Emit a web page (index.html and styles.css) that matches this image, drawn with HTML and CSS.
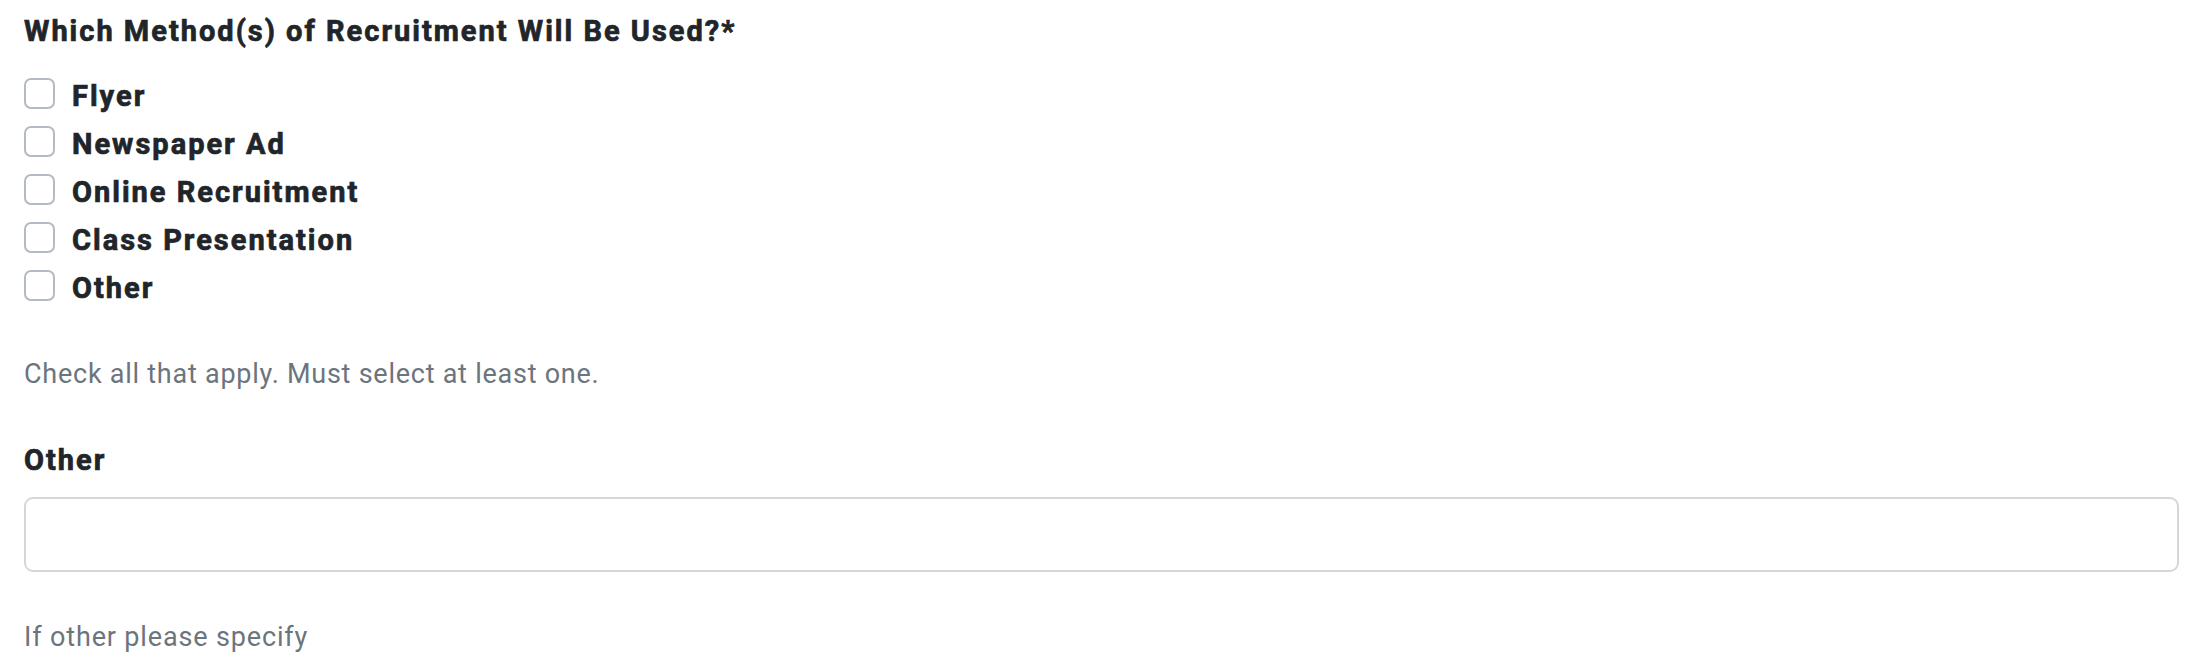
FILE: index.html
```html
<!DOCTYPE html>
<html lang="en">
<head>
<meta charset="utf-8">
<title>Recruitment methods</title>
<link rel="stylesheet" href="styles.css">
</head>
<body>
<form class="form">
  <fieldset class="field">
    <legend class="field-label">Which Method(s) of Recruitment Will Be Used?*</legend>
    <div class="checks">
      <label class="check"><input class="check-input" type="checkbox"><span class="check-label">Flyer</span></label>
      <label class="check"><input class="check-input" type="checkbox"><span class="check-label">Newspaper Ad</span></label>
      <label class="check"><input class="check-input" type="checkbox"><span class="check-label">Online Recruitment</span></label>
      <label class="check"><input class="check-input" type="checkbox"><span class="check-label">Class Presentation</span></label>
      <label class="check"><input class="check-input" type="checkbox"><span class="check-label">Other</span></label>
    </div>
    <p class="help">Check all that apply. Must select at least one.</p>
  </fieldset>
  <div class="field field-other">
    <label class="field-label" for="other">Other</label>
    <input class="text-input" id="other" type="text">
    <p class="help help-wide">If other please specify</p>
  </div>
</form>
</body>
</html>
```

FILE: styles.css
```css
html, body {
  margin: 0;
  padding: 0;
  background: #ffffff;
}

body {
  font-family: Roboto, "Liberation Sans", Arial, sans-serif;
  color: #212529;
}

.form {
  display: flex;
  flex-direction: column;
  padding: 14px 25px 0 24px;
}

.field {
  border: 0;
  margin: 0;
  padding: 0;
  min-width: 0;
  display: flex;
  flex-direction: column;
}

.field-label {
  display: block;
  padding: 0;
  font-size: 29px;
  line-height: 34px;
  font-weight: 700;
  letter-spacing: 2px;
  -webkit-text-stroke: 0.7px currentColor;
  color: #212529;
}

fieldset .field-label {
  float: left;
  width: 100%;
  margin-bottom: 21px;
}

.checks {
  clear: both;
  display: flex;
  flex-direction: column;
}

.check {
  display: flex;
  align-items: flex-start;
  gap: 17px;
  height: 48px;
  cursor: pointer;
}

.check-input {
  appearance: none;
  -webkit-appearance: none;
  flex: none;
  width: 31px;
  height: 31px;
  margin: 9px 0 0 0;
  border: 2px solid #b4bac2;
  border-radius: 7px;
  background: #ffffff;
  box-sizing: border-box;
}

.check-label {
  font-size: 29px;
  line-height: 42px;
  padding-top: 6px;
  font-weight: 700;
  letter-spacing: 2px;
  -webkit-text-stroke: 0.7px currentColor;
  color: #212529;
}

.help {
  margin: 45px 0 0 0;
  font-size: 27px;
  line-height: 40px;
  font-weight: 400;
  letter-spacing: 0.75px;
  color: #6c757d;
}

.help-wide {
  letter-spacing: 0.85px;
}

.field-other {
  margin-top: 49px;
}

.text-input {
  display: block;
  box-sizing: border-box;
  width: 100%;
  height: 75px;
  margin-top: 20px;
  border: 2px solid #d3d7dc;
  border-radius: 9px;
  background: #ffffff;
  font: inherit;
  font-size: 27px;
  padding: 0 20px;
}
```
